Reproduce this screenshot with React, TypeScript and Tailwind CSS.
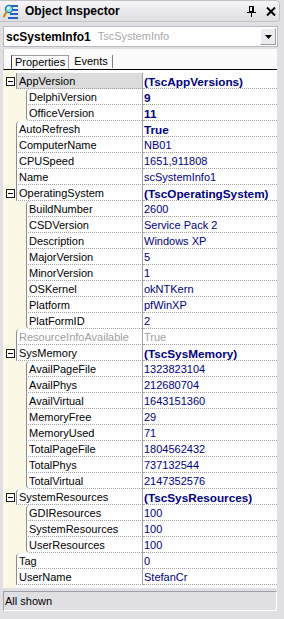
import React from "react";

type Row = {
  name: string;
  value: string;
  level: 0 | 1;
  bold?: boolean;
  expand?: boolean;
  disabled?: boolean;
  selected?: boolean;
};

const rows: Row[] = [
  { name: "AppVersion", value: "(TscAppVersions)", level: 0, bold: true, expand: true, selected: true },
  { name: "DelphiVersion", value: "9", level: 1, bold: true },
  { name: "OfficeVersion", value: "11", level: 1, bold: true },
  { name: "AutoRefresh", value: "True", level: 0, bold: true },
  { name: "ComputerName", value: "NB01", level: 0 },
  { name: "CPUSpeed", value: "1651,911808", level: 0 },
  { name: "Name", value: "scSystemInfo1", level: 0 },
  { name: "OperatingSystem", value: "(TscOperatingSystem)", level: 0, bold: true, expand: true },
  { name: "BuildNumber", value: "2600", level: 1 },
  { name: "CSDVersion", value: "Service Pack 2", level: 1 },
  { name: "Description", value: "Windows XP", level: 1 },
  { name: "MajorVersion", value: "5", level: 1 },
  { name: "MinorVersion", value: "1", level: 1 },
  { name: "OSKernel", value: "okNTKern", level: 1 },
  { name: "Platform", value: "pfWinXP", level: 1 },
  { name: "PlatFormID", value: "2", level: 1 },
  { name: "ResourceInfoAvailable", value: "True", level: 0, disabled: true },
  { name: "SysMemory", value: "(TscSysMemory)", level: 0, bold: true, expand: true },
  { name: "AvailPageFile", value: "1323823104", level: 1 },
  { name: "AvailPhys", value: "212680704", level: 1 },
  { name: "AvailVirtual", value: "1643151360", level: 1 },
  { name: "MemoryFree", value: "29", level: 1 },
  { name: "MemoryUsed", value: "71", level: 1 },
  { name: "TotalPageFile", value: "1804562432", level: 1 },
  { name: "TotalPhys", value: "737132544", level: 1 },
  { name: "TotalVirtual", value: "2147352576", level: 1 },
  { name: "SystemResources", value: "(TscSysResources)", level: 0, bold: true, expand: true },
  { name: "GDIResources", value: "100", level: 1 },
  { name: "SystemResources", value: "100", level: 1 },
  { name: "UserResources", value: "100", level: 1 },
  { name: "Tag", value: "0", level: 0 },
  { name: "UserName", value: "StefanCr", level: 0 },
];

function MinusBox() {
  return (
    <svg width="9" height="9" viewBox="0 0 9 9" className="block">
      <rect x="0.5" y="0.5" width="8" height="8" fill="#ffffff" stroke="#1a1a1a" />
      <line x1="2" y1="4.5" x2="7" y2="4.5" stroke="#000000" />
    </svg>
  );
}

function InspectorIcon() {
  return (
    <svg width="16" height="17" viewBox="0 0 16 17" className="block">
      <rect x="7" y="2" width="8" height="2" fill="#2a5fc0" />
      <rect x="7" y="6" width="8" height="2" fill="#2a5fc0" />
      <rect x="7" y="10" width="8" height="2" fill="#2a5fc0" />
      <rect x="5" y="14" width="10" height="2" fill="#2a5fc0" />
      <circle cx="6" cy="6" r="3.6" fill="#7fe0f0" stroke="#1b7da0" strokeWidth="1.2" />
      <circle cx="5.2" cy="5.2" r="1.2" fill="#ffffff" />
      <line x1="3.4" y1="9" x2="0.8" y2="13.5" stroke="#d08a10" strokeWidth="2.2" strokeLinecap="round" />
    </svg>
  );
}

function PinIcon() {
  return (
    <svg width="9" height="11" viewBox="0 0 9 11" className="block">
      <rect x="2.5" y="0.5" width="4" height="5" fill="none" stroke="#000" />
      <line x1="5.5" y1="1" x2="5.5" y2="5" stroke="#000" />
      <line x1="0" y1="6.5" x2="9" y2="6.5" stroke="#000" />
      <line x1="4.5" y1="7" x2="4.5" y2="11" stroke="#000" />
    </svg>
  );
}

function CloseIcon() {
  return (
    <svg width="10" height="9" viewBox="0 0 10 9" className="block">
      <path d="M1 0.5 L9 8.5 M9 0.5 L1 8.5" stroke="#000" strokeWidth="2" />
    </svg>
  );
}

export default function App() {
  return (
    <div
      className="w-[284px] h-[619px] bg-[#e0dfe3] flex flex-col overflow-hidden text-[11px] text-black"
      style={{ fontFamily: '"Liberation Sans", Arial, sans-serif' }}
    >
      {/* Title bar */}
      <div className="h-[22px] mr-[4px] flex items-center rounded-tr-[5px] rounded-br-[3px] border border-l-0 border-[#c3c3c7] bg-gradient-to-b from-[#f6f6f8] to-[#dedde2]">
        <div className="pl-[3px] pr-[6px]">
          <InspectorIcon />
        </div>
        <div className="flex-1 font-bold text-[12px] leading-none">Object Inspector</div>
        <div className="pr-[10px]">
          <PinIcon />
        </div>
        <div className="pr-[3px]">
          <CloseIcon />
        </div>
      </div>

      {/* Combo */}
      <div className="mt-[4px] ml-[3px] mr-[6px] h-[21px] border border-[#b9b9bd] bg-white flex items-center">
        <div className="flex-1 pl-[2px] flex items-center gap-[7px] whitespace-nowrap overflow-hidden">
          <span className="font-bold text-[12px]">scSystemInfo1</span>
          <span className="text-[#a8a8a8]">TscSystemInfo</span>
        </div>
        <div className="w-[16px] h-[17px] mr-[1px] bg-[#ecebef] border border-t-white border-l-white border-r-[#9c9ca0] border-b-[#9c9ca0] flex items-center justify-center">
          <svg width="7" height="4" viewBox="0 0 7 4" className="block">
            <path d="M0 0 H7 L3.5 4 Z" fill="#000" />
          </svg>
        </div>
      </div>

      {/* Tabs */}
      <div className="mt-[2px] mx-[3px] w-[274px] h-[21px] bg-[#fbfbfb] border-l border-[#c8c8cc] border-b border-b-black flex items-end pl-[7px]">
        <div className="h-[14px] px-[3px] border-l border-t border-r border-l-[#404040] border-t-[#9c9c9c] border-r-[#9c9c9c] flex items-center leading-none">
          Properties
        </div>
        <div className="h-[13px] mb-[1px] pl-[5px] pr-[4px] border-r border-[#808080] flex items-center leading-none">
          Events
        </div>
      </div>

      {/* Grid */}
      <div className="mx-[3px] w-[274px] h-[518px] bg-white flex flex-col">
        <div className="h-[3px] flex shrink-0">
          <div className="w-[13px] bg-[#fcf8e6]" />
          <div className="flex-1 bg-white" />
        </div>
        {rows.map((r, i) => {
          const prev = rows[i - 1];
          const next = rows[i + 1];
          const roundTl =
            (r.level === 1 && prev && prev.level === 0) ||
            (r.level === 0 && prev && prev.level === 1);
          const roundBl = r.level === 1 && (!next || next.level === 0);
          const valueColor = r.disabled ? "text-[#a0a0a0]" : "text-[#000080]";
          return (
            <div key={i} className="h-[16px] flex shrink-0">
              <div
                className={
                  "h-[16px] bg-[#fcf8e6] flex items-center shrink-0 " +
                  (r.level === 1 ? "w-[23px]" : "w-[13px] pl-[3px]")
                }
              >
                {r.expand ? <MinusBox /> : null}
              </div>
              <div
                className={
                  "h-[16px] flex-1 min-w-0 border-l border-l-[#8c8c8c] border-r border-r-[#a0a0a0] border-b border-b-[#a0a0a0] border-dotted pl-[2px] leading-[17px] whitespace-nowrap overflow-hidden " +
                  (r.selected ? "bg-[#dcdcdc] " : "bg-white ") +
                  (roundTl ? "rounded-tl-[4px] " : "") +
                  (roundBl ? "rounded-bl-[4px] " : "") +
                  (r.disabled ? "text-[#a0a0a0]" : "text-black")
                }
                style={{ borderLeftStyle: "solid", borderRightStyle: "solid" }}
              >
                {r.name}
              </div>
              <div
                className={
                  "h-[16px] w-[134px] shrink-0 border-b border-dotted border-[#a0a0a0] pl-[1px] whitespace-nowrap overflow-hidden leading-[17px] " +
                  valueColor +
                  (r.bold ? " font-bold text-[11.75px]" : "")
                }
              >
                {r.value}
              </div>
            </div>
          );
        })}
        <div className="flex-1 flex">
          <div className="w-[13px] bg-[#fcf8e6]" />
          <div className="flex-1 bg-white" />
        </div>
      </div>

      {/* Status bar */}
      <div className="mt-[3px] mx-[3px] w-[274px] h-[20px] border border-t-[#a0a0a4] border-l-[#a0a0a4] border-r-white border-b-white flex items-center pl-[1px] leading-none">
        All shown
      </div>
    </div>
  );
}
